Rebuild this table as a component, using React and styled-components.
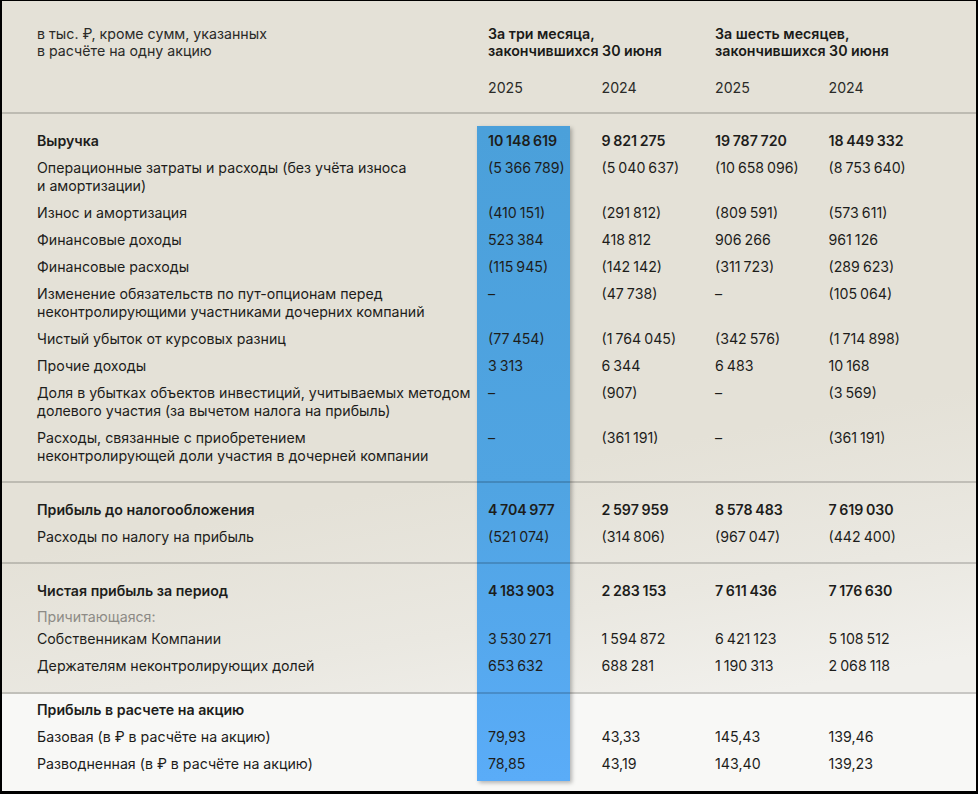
import styled, { createGlobalStyle } from 'styled-components';

const GlobalStyle = createGlobalStyle`
  html, body {
    margin: 0;
    padding: 0;
    background: #000;
  }
  body {
    font-family: Inter, "Noto Sans", sans-serif;
    color: #1d1d1b;
  }
`;

const rows = [
  {
    section: 'main',
    items: [
      { label: 'Выручка', values: ['10 148 619', '9 821 275', '19 787 720', '18 449 332'], bold: true },
      {
        label: ['Операционные затраты и расходы (без учёта износа', 'и амортизации)'],
        values: ['(5 366 789)', '(5 040 637)', '(10 658 096)', '(8 753 640)'],
      },
      { label: 'Износ и амортизация', values: ['(410 151)', '(291 812)', '(809 591)', '(573 611)'] },
      { label: 'Финансовые доходы', values: ['523 384', '418 812', '906 266', '961 126'] },
      { label: 'Финансовые расходы', values: ['(115 945)', '(142 142)', '(311 723)', '(289 623)'] },
      {
        label: ['Изменение обязательств по пут-опционам перед', 'неконтролирующими участниками дочерних компаний'],
        values: ['–', '(47 738)', '–', '(105 064)'],
      },
      { label: 'Чистый убыток от курсовых разниц', values: ['(77 454)', '(1 764 045)', '(342 576)', '(1 714 898)'] },
      { label: 'Прочие доходы', values: ['3 313', '6 344', '6 483', '10 168'] },
      {
        label: ['Доля в убытках объектов инвестиций, учитываемых методом', 'долевого участия (за вычетом налога на прибыль)'],
        values: ['–', '(907)', '–', '(3 569)'],
      },
      {
        label: ['Расходы, связанные с приобретением', 'неконтролирующей доли участия в дочерней компании'],
        values: ['–', '(361 191)', '–', '(361 191)'],
      },
    ],
  },
  {
    section: 'tax',
    items: [
      { label: 'Прибыль до налогообложения', values: ['4 704 977', '2 597 959', '8 578 483', '7 619 030'], bold: true },
      { label: 'Расходы по налогу на прибыль', values: ['(521 074)', '(314 806)', '(967 047)', '(442 400)'] },
    ],
  },
  {
    section: 'net',
    items: [
      { label: 'Чистая прибыль за период', values: ['4 183 903', '2 283 153', '7 611 436', '7 176 630'], bold: true },
      { label: 'Причитающаяся:', values: [], muted: true },
      { label: 'Собственникам Компании', values: ['3 530 271', '1 594 872', '6 421 123', '5 108 512'] },
      { label: 'Держателям неконтролирующих долей', values: ['653 632', '688 281', '1 190 313', '2 068 118'] },
    ],
  },
  {
    section: 'eps',
    items: [
      { label: 'Прибыль в расчете на акцию', values: [], bold: true },
      { label: 'Базовая (в ₽ в расчёте на акцию)', values: ['79,93', '43,33', '145,43', '139,46'] },
      { label: 'Разводненная (в ₽ в расчёте на акцию)', values: ['78,85', '43,19', '143,40', '139,23'] },
    ],
  },
];

const App = () => {
  return (
    <>
      <GlobalStyle />
      <Panel>
        <Header>
          <HeadRow>
            <Note>
              в тыс. ₽, кроме сумм, указанных
              <br />
              в расчёте на одну акцию
            </Note>
            <Period>
              За три месяца,
              <br />
              закончившихся 30 июня
            </Period>
            <Period>
              За шесть месяцев,
              <br />
              закончившихся 30 июня
            </Period>
          </HeadRow>
          <YearRow>
            <span />
            <Year>2025</Year>
            <Year>2024</Year>
            <Year>2025</Year>
            <Year>2024</Year>
          </YearRow>
        </Header>
        <Body>
          <Highlight />
          {rows.map((group) => {
            const last = group.section === 'eps';
            return (
              <Section key={group.section} $last={last}>
                {group.items.map((row, i) => (
                  <Row key={i} $muted={row.muted}>
                    <Label $bold={row.bold} $muted={row.muted}>
                      {Array.isArray(row.label) ? (
                        <>
                          {row.label[0]}
                          <br />
                          {row.label[1]}
                        </>
                      ) : (
                        row.label
                      )}
                    </Label>
                    {row.values.map((v, j) => (
                      <Value key={j} $bold={row.bold}>
                        {v}
                      </Value>
                    ))}
                  </Row>
                ))}
              </Section>
            );
          })}
        </Body>
      </Panel>
    </>
  );
};

export default App;

// Styled Components
const Panel = styled.div`
  margin: 1px 2px 0 2px;
  width: 974px;
  height: 790px;
  display: flex;
  flex-direction: column;
  background: linear-gradient(170deg, #e4e1d7 0%, #e4e1d7 58%, #eae8e1 74%, #f1f0ec 86%);
  overflow: hidden;
`;

const Header = styled.div`
  padding: 24px 0 16px 35px;
  display: flex;
  flex-direction: column;
  gap: 20px;
  border-bottom: 2px solid rgba(0, 0, 0, 0.17);
`;

const HeadRow = styled.div`
  display: grid;
  grid-template-columns: 451px 227px 227px;
  font-size: 14.2px;
  line-height: 17px;
`;

const Note = styled.div`
  color: #2a2a28;
`;

const Period = styled.div`
  font-weight: 600;
  color: #1a1a18;
`;

const YearRow = styled.div`
  display: grid;
  grid-template-columns: 451px repeat(4, 113.5px);
  font-size: 14.2px;
  line-height: 17px;
`;

const Year = styled.div`
  color: #2a2a28;
`;

const Body = styled.div`
  position: relative;
  z-index: 0;
  flex: 1;
  display: flex;
  flex-direction: column;
`;

const Highlight = styled.div`
  position: absolute;
  top: 12px;
  bottom: 10px;
  left: 475px;
  width: 93px;
  background: linear-gradient(180deg, #4ba0da 0%, #50a4e2 55%, #5aacf8 100%);
  box-shadow: 2px 2px 4px rgba(0, 0, 0, 0.28);
  z-index: 1;
`;

const Section = styled.div`
  position: relative;
  padding: ${(p) => (p.$last ? '3px 0 0 35px' : '13px 0 12px 35px')};
  background: ${(p) => (p.$last ? '#f8f8f6' : 'transparent')};
  flex: ${(p) => (p.$last ? 1 : 'none')};
  margin-bottom: ${(p) => (p.$last ? 0 : '2px')};

  &::after {
    content: '';
    display: ${(p) => (p.$last ? 'none' : 'block')};
    position: absolute;
    left: 0;
    right: 0;
    bottom: -2px;
    height: 2px;
    background: rgba(0, 0, 0, 0.17);
    z-index: 2;
  }
`;

const Row = styled.div`
  display: grid;
  grid-template-columns: 440px repeat(4, 113.5px);
  font-size: 14.2px;
  line-height: 18px;
  padding: ${(p) => (p.$muted ? '4px 0 0' : '4.5px 0')};
  height: ${(p) => (p.$muted ? '17.5px' : 'auto')};
`;

const Label = styled.div`
  font-weight: ${(p) => (p.$bold ? 600 : 400)};
  color: ${(p) => (p.$muted ? '#8d8b86' : '#1d1d1b')};
  white-space: nowrap;
`;

const Value = styled.div`
  position: relative;
  z-index: 2;
  padding-left: 11px;
  font-weight: ${(p) => (p.$bold ? 600 : 400)};
  white-space: nowrap;
  word-spacing: -1px;
`;
